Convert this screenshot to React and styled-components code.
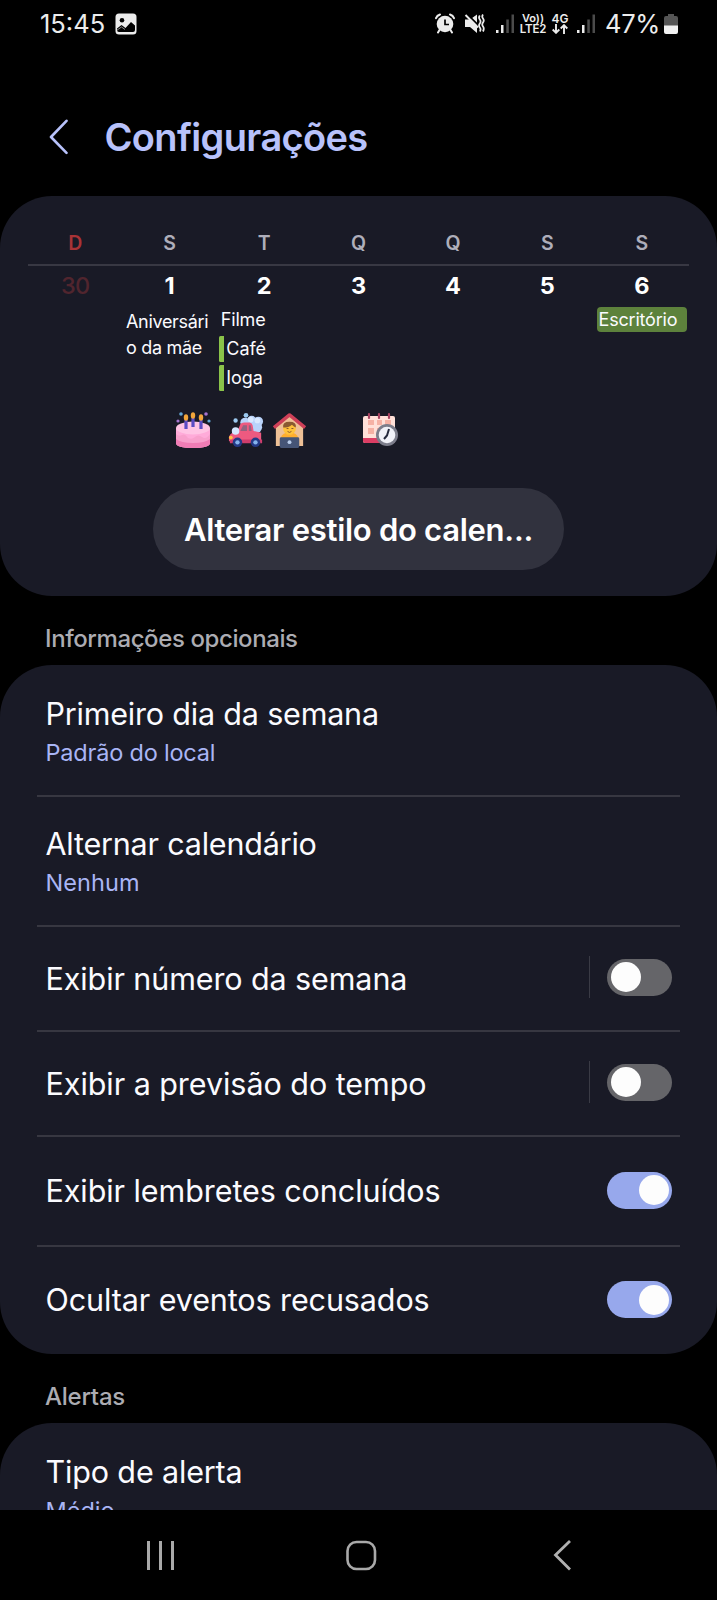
import React from 'react';
import styled, { createGlobalStyle } from 'styled-components';

const Global = createGlobalStyle`
  * { box-sizing: border-box; }
  html, body { margin: 0; background: #000; }
  body { width: 717px; height: 1600px; overflow: hidden; font-family: Inter, Roboto, "Liberation Sans", sans-serif; }
`;

const Screen = styled.main`
  display: flex;
  flex-direction: column;
  width: 717px;
  height: 1600px;
  background: #000;
  color: #fbfbff;
  overflow: hidden;
`;

const Label = styled.span`
  display: block;
  margin: 0;
  white-space: nowrap;
  font-size: ${(p) => p.$size}px;
  line-height: ${(p) => p.$line || p.$size}px;
  font-weight: ${(p) => p.$weight || 400};
  letter-spacing: ${(p) => p.$track || 0}px;
  color: ${(p) => p.$color || 'inherit'};
`;

const StatusBar = styled.header`
  display: flex;
  justify-content: space-between;
  height: 47px;
  padding: 0 38px 0 40px;
  align-items: center;
  color: #ececec;
`;
const StatusGroup = styled.div`
  display: flex;
  align-items: center;
  gap: ${(p) => p.$gap || 0}px;
`;
const StatusItem = styled.div`
  display: flex;
  flex: none;
  flex-direction: column;
  align-items: center;
  width: ${(p) => p.$width}px;
  margin-left: ${(p) => p.$before || 0}px;
`;

const TitleBar = styled.div`
  display: flex;
  align-items: center;
  height: 149px;
  padding: 30px 0 0 49px;
  gap: 35.5px;
`;

const Viewport = styled.div`
  flex: 1;
  min-height: 0;
  overflow: hidden;
`;

const Card = styled.section`
  background: #191a26;
  border-radius: 52px;
  height: ${(p) => p.$height}px;
`;

const CalendarCard = styled(Card)`
  display: flex;
  flex-direction: column;
  align-items: center;
  padding: 36px 28px 0;
`;
const WeekRow = styled.div`
  display: grid;
  grid-template-columns: repeat(7, 1fr);
  width: 661px;
  height: ${(p) => p.$height}px;
  justify-items: center;
  align-items: start;
  border-bottom: ${(p) => (p.$ruled ? '2px solid #383843' : '0')};
`;
const DayEvents = styled.div`
  justify-self: stretch;
  display: flex;
  flex-direction: column;
  gap: 3px;
  padding: 0 2px;
`;
const Wrapped = styled.p`
  margin: 0;
  padding: 2px 0 0 1.5px;
  font-size: 18px;
  line-height: 25.5px;
  white-space: pre;
  letter-spacing: ${(p) => p.$track}px;
`;
const EventChip = styled.div`
  height: ${(p) => (p.$fill ? 25 : 26)}px;
  padding-left: ${(p) => (p.$bar ? 2.5 : 2)}px;
  border-left: ${(p) => (p.$bar ? '5px solid #8bc34a' : '0')};
  border-radius: ${(p) => (p.$bar ? 1.5 : 4)}px;
  background: ${(p) => (p.$fill ? '#5d823c' : 'transparent')};
  font-size: 18px;
  line-height: 26px;
  letter-spacing: ${(p) => p.$track || 0}px;
  white-space: nowrap;
`;
const Stickers = styled.div`
  display: flex;
  align-items: center;
  width: 661px;
  height: 40px;
  padding: 0 0 1px 146px;
`;
const Sticker = styled.svg`
  display: block;
  width: ${(p) => p.$size || 38}px;
  height: ${(p) => p.$size || 38}px;
  margin-right: ${(p) => p.$after || 0}px;
`;
const StyleButton = styled.button`
  margin-top: 38px;
  width: 411px;
  height: 82px;
  padding: 2px 0 0;
  border: 0;
  border-radius: 41px;
  background: #31323e;
  color: #fff;
  font-family: inherit;
  display: flex;
  align-items: center;
  justify-content: center;
`;

const SectionTitle = styled.h2`
  margin: 0;
  height: 69px;
  padding: 29px 0 0 45px;
`;
const Setting = styled.div`
  display: flex;
  align-items: center;
  justify-content: space-between;
  height: ${(p) => p.$height}px;
  margin: 0 37px;
  padding: ${(p) => p.$top || 0}px 8px 0 8.5px;
  border-bottom: ${(p) => (p.$last ? '0' : '2px solid #373741')};
`;
const SettingText = styled.div`
  display: flex;
  flex-direction: column;
  gap: 1px;
`;
const Control = styled.div`
  display: flex;
  align-items: center;
  gap: 17px;
  padding-bottom: ${(p) => (p.$separated ? 3 : 1)}px;
`;
const Separator = styled.div`
  width: 1.5px;
  height: 42px;
  background: #3a3b45;
`;
const Toggle = styled.div`
  display: flex;
  align-items: center;
  justify-content: ${(p) => (p.$on ? 'flex-end' : 'flex-start')};
  width: 65px;
  height: 37px;
  padding: 0 3.5px;
  border-radius: 19px;
  background: ${(p) => (p.$on ? '#97a8ec' : '#656569')};
`;
const Knob = styled.div`
  width: 30px;
  height: 30px;
  border-radius: 50%;
  background: #fdfdfd;
`;

const NavBar = styled.nav`
  flex: none;
  height: 90px;
  display: flex;
  align-items: flex-start;
  padding: 29px 0 0 145px;
  background: #000;
`;
const NavIcon = styled.svg`
  display: block;
  width: 32px;
  height: 32px;
  margin-right: ${(p) => p.$after || 0}px;
`;

const PictureIcon = () => (
  <svg width="22" height="22" viewBox="0 0 22 22">
    <rect x=".5" y=".5" width="21" height="21" rx="3.5" fill="#ececec" />
    <circle cx="7" cy="7.3" r="2.3" fill="#000" />
    <path d="M2 15.500 6.500 12l4 3 5.500-6 4 3.500V17q0 2-2 2H4q-2 0-2-2z" fill="#000" />
    <path d="M1.500 17.500 6.500 14l3.500 2.500" fill="none" stroke="#ececec" strokeWidth=".6" />
  </svg>
);
const AlarmIcon = () => (
  <svg width="20" height="21" viewBox="0 0 20 21" fill="none" stroke="#ececec">
    <circle cx="10" cy="11" r="8.300" fill="#ececec" stroke="none" />
    <path d="M1 5.200Q2 2.400 5 1.500M19 5.200Q18 2.400 15 1.500M4.500 17 3 19.500M15.500 17l1.500 2.500" strokeWidth="2" strokeLinecap="round" />
    <path d="M10 6.500v5h4" stroke="#000" strokeWidth="1.700" />
  </svg>
);
const MuteIcon = () => (
  <svg width="21" height="21" viewBox="0 0 21 21">
    <path d="M1 6.500h5l7-5v18.500l-7-6H1z" fill="#ececec" />
    <path d="M3.500 1.500 14.500 12.500" stroke="#000" strokeWidth="1.800" />
    <path d="M1.500 2 14 14.500" stroke="#ececec" strokeWidth="2" />
    <path d="M15.800 2.500q-1.500 2 0 4t0 4 0 4 0 4M19 1.500q-1.500 2 0 4t0 4 0 4 0 5" fill="none" stroke="#ececec" strokeWidth="1.800" />
  </svg>
);
const SignalIcon = () => (
  <svg width="19" height="21" viewBox="0 0 19 21">
    <path d="M0 17h2.500v3H0zM5 12h2.500v8H5z" fill="#ececec" />
    <path d="M10.300 6.500h2.500V20h-2.500zM15.500 1.500H18V20h-2.500z" fill="#4b4b4b" />
  </svg>
);
const DataArrows = () => (
  <svg width="16" height="10" viewBox="0 0 16 10" fill="none" stroke="#ececec" strokeWidth="1.900">
    <path d="M4 0v9M.7 5.500 4 8.800l3.300-3.300M12 10V1M8.700 4.500 12 1.200l3.300 3.300" />
  </svg>
);
const BatteryIcon = () => (
  <svg width="16" height="22" viewBox="0 0 16 22">
    <path d="M5 1h6v2h2q2 0 2 2v8H1V5q0-2 2-2h2z" fill="#555" />
    <path d="M1 12.500h14V19q0 2-2 2H3q-2 0-2-2z" fill="#f1f1f1" />
  </svg>
);
const BackIcon = () => (
  <svg width="20" height="36" viewBox="0 0 20 36" fill="none" stroke="#b8c2fb" strokeWidth="2.600" strokeLinecap="round" strokeLinejoin="round">
    <path d="M17.500 1.800 2 18l15.500 15.800" />
  </svg>
);

const Cake = () => (
  <Sticker viewBox="0 0 38 38" $after={16}>
    <path d="M2 18v14q0 5 17 5t17-5V18z" fill="#f8a0cc" />
    <path d="M2 28q5 4 17 4t17-4v4q0 5-17 5T2 32z" fill="#f07db5" />
    <path d="M2 17v6q3 3 6 1t6 3q4 2 7-1t7 0q4 3 8-3v-6z" fill="#ffabd9" />
    <ellipse cx="19" cy="17" rx="17" ry="6.500" fill="#ffc4e4" />
    <path d="M12 9v9M19 7v9M27 9v9" stroke="#5b4cc4" strokeWidth="3.200" />
    <g fill="#f3a63a"><ellipse cx="12" cy="6.500" rx="2.200" ry="3.200" /><ellipse cx="19" cy="4.500" rx="2.200" ry="3.200" /><ellipse cx="27" cy="6.500" rx="2.200" ry="3.200" /></g>
    <g fill="#63a8d8"><circle cx="7" cy="3" r="1.800" /><circle cx="35" cy="10" r="1.600" /></g>
    <g fill="#a574cf"><circle cx="4" cy="10" r="1.600" /><circle cx="32" cy="3" r="1.800" /></g>
  </Sticker>
);
const Car = () => (
  <Sticker viewBox="0 0 38 38" $size={36} $after={7}>
    <g fill="#b9d3fa"><circle cx="18" cy="11" r="5" /><circle cx="25" cy="9" r="5" /><circle cx="32" cy="10" r="5" /><circle cx="30" cy="16" r="6" /></g>
    <g fill="#d9e9ff"><circle cx="24" cy="8" r="3" /><circle cx="31" cy="9" r="3" /></g>
    <g fill="#9cc9ef"><circle cx="19" cy="3.500" r="2.500" /><circle cx="8" cy="9" r="2.300" /></g>
    <path d="M1 31v-5q2-5 9-6l3-7q1-2 4-2h6q2 0 3 3l1 6 8 2v9z" fill="#ed5a80" />
    <path d="m13 20 3-6h4v6zM22 14h2l1 6h-3z" fill="#93627f" />
    <path d="M2 29h34v4H2z" fill="#cf3d6c" />
    <circle cx="8" cy="20" r="4" fill="#d5e7ff" /><circle cx="3" cy="27" r="2" fill="#ffc344" />
    <g fill="#243a86"><circle cx="10" cy="32" r="5" /><circle cx="29" cy="32" r="5" /></g>
    <g fill="#85b3ed"><circle cx="10" cy="32" r="2.300" /><circle cx="29" cy="32" r="2.300" /></g>
  </Sticker>
);
const HomeOffice = () => (
  <Sticker viewBox="0 0 38 38" $size={37} $after={53}>
    <path d="M5 15 19 5l14 10v21H5z" fill="#eec096" />
    <path d="M3 17 19 4l16 13" fill="none" stroke="#cf4058" strokeWidth="3.500" strokeLinejoin="round" />
    <path d="M10 28q1-6 9-6t9 6v3H10z" fill="#ffad2f" />
    <circle cx="19" cy="18" r="6.500" fill="#ffc23b" />
    <path d="M12.500 17q-1-6 6.500-6t6.500 6q-2-1-4-3-3 3-9 3z" fill="#8a5a30" />
    <path d="M16 18h2m3 0h2m-6 3q2 2 4 0" stroke="#8a532c" fill="none" />
    <rect x="9" y="27" width="20" height="11" rx="1.500" fill="#465577" />
    <circle cx="19" cy="32" r="2" fill="#b9cdeb" />
  </Sticker>
);
const CalendarClock = () => (
  <Sticker viewBox="0 0 38 38">
    <rect x="2" y="5" width="32" height="27" rx="2" fill="#ffe0d8" />
    <path d="M2 27h32v3q0 2-2 2H4q-2 0-2-2z" fill="#dc3e64" />
    <path d="M7 9h6v5H7zM16 9h5v5h-5zM24 9h6v5h-6zM7 17h6v6H7zM16 17h5v6h-5z" fill="#f5b1a4" />
    <path d="M8 3v4M18 3v4M28 3v4" stroke="#a84462" strokeWidth="2.200" strokeLinecap="round" />
    <circle cx="26" cy="24" r="11" fill="#7c7d8b" /><circle cx="26" cy="24" r="8.300" fill="#f0f1f8" />
    <path d="M28 18 26 24.500 23 28" stroke="#24283c" strokeWidth="2" fill="none" />
  </Sticker>
);

const weekdays = ['D', 'S', 'T', 'Q', 'Q', 'S', 'S'];
const dates = ['30', '1', '2', '3', '4', '5', '6'];

const SettingRow = ({ title, track, sub, subTrack, height, top, last, toggle, separated }) => (
  <Setting $height={height} $top={top} $last={last}>
    <SettingText>
      <Label $size={30.5} $line={40} $track={track}>{title}</Label>
      {sub && <Label $size={23.5} $line={36} $track={subTrack} $color="#a9b5f5">{sub}</Label>}
    </SettingText>
    {toggle && (
      <Control $separated={separated}>
        {separated && <Separator />}
        <Toggle $on={toggle === 'on'}><Knob /></Toggle>
      </Control>
    )}
  </Setting>
);

export default function App() {
  return (
    <Screen>
      <Global />
      <StatusBar>
        <StatusGroup $gap={9.5}>
          <Label $size={25.5}>15:45</Label>
          <PictureIcon />
        </StatusGroup>
        <StatusGroup>
          <StatusItem $width={20}><AlarmIcon /></StatusItem>
          <StatusItem $width={21} $before={9}><MuteIcon /></StatusItem>
          <StatusItem $width={19} $before={11}><SignalIcon /></StatusItem>
          <StatusItem $width={26} $before={5}>
            <Label $size={11} $line={11} $weight={600}>Vo))</Label>
            <Label $size={11.5} $line={11} $weight={600} $track={-0.2}>LTE2</Label>
          </StatusItem>
          <StatusItem $width={16} $before={6}>
            <Label $size={12} $line={11} $weight={600}>4G</Label>
            <DataArrows />
          </StatusItem>
          <StatusItem $width={19} $before={9}><SignalIcon /></StatusItem>
          <StatusItem $width={55} $before={9}><Label $size={25.5} $track={-0.3}>47%</Label></StatusItem>
          <StatusItem $width={16} $before={3}><BatteryIcon /></StatusItem>
        </StatusGroup>
      </StatusBar>
      <TitleBar>
        <BackIcon />
        <Label as="h1" $size={38} $line={46} $weight={600} $track={-0.65} $color="#b8c2fb">Configurações</Label>
      </TitleBar>
      <Viewport>
        <CalendarCard $height={399.5}>
          <WeekRow $height={34} $ruled>
            {weekdays.map((d, i) => (
              <Label key={i} $size={19.5} $line={22} $weight={600} $color={i ? '#aeaeba' : '#a93336'}>{d}</Label>
            ))}
          </WeekRow>
          <WeekRow $height={41}>
            {dates.map((d, i) => (
              <Label key={d} $size={23.5} $line={40} $weight={i ? 650 : 500} $track={i ? 0 : -0.8} $color={i ? '#fff' : '#51252e'}>{d}</Label>
            ))}
          </WeekRow>
          <WeekRow $height={103}>
            <span />
            <DayEvents><Wrapped $track={-0.3}>{'Aniversári\no da mãe'}</Wrapped></DayEvents>
            <DayEvents>
              <EventChip $track={-0.2}>Filme</EventChip>
              <EventChip $bar $track={-0.1}>Café</EventChip>
              <EventChip $bar $track={-0.1}>Ioga</EventChip>
            </DayEvents>
            <span /><span /><span />
            <DayEvents><EventChip $fill $track={-0.2}>Escritório</EventChip></DayEvents>
          </WeekRow>
          <Stickers><Cake /><Car /><HomeOffice /><CalendarClock /></Stickers>
          <StyleButton><Label $size={31} $line={40} $weight={600} $track={-0.28}>Alterar estilo do calen...</Label></StyleButton>
        </CalendarCard>
        <SectionTitle><Label $size={24} $line={28} $weight={550} $track={-0.4} $color="#acacb2">Informações opcionais</Label></SectionTitle>
        <Card $height={689}>
          <SettingRow title="Primeiro dia da semana" track={-0.19} sub="Padrão do local" subTrack={-0.2} height={132} top={6} />
          <SettingRow title="Alternar calendário" track={-0.2} sub="Nenhum" subTrack={0.1} height={130.5} top={4} />
          <SettingRow title="Exibir número da semana" track={-0.1} height={105} toggle="off" separated />
          <SettingRow title="Exibir a previsão do tempo" track={-0.05} height={105} toggle="off" separated />
          <SettingRow title="Exibir lembretes concluídos" track={-0.07} height={109.5} toggle="on" />
          <SettingRow title="Ocultar eventos recusados" track={-0.1} height={107} toggle="on" last />
        </Card>
        <SectionTitle><Label $size={24} $line={28} $weight={550} $track={-0.25} $color="#acacb2">Alertas</Label></SectionTitle>
        <Card $height={300}>
          <SettingRow title="Tipo de alerta" track={-0.15} sub="Médio" height={132} top={6} />
        </Card>
      </Viewport>
      <NavBar>
        <NavIcon viewBox="0 0 32 32" $after={168} stroke="#a9a9a9" strokeWidth="3"><path d="M3.500 2v29M15.500 2v29M27.500 2v29" /></NavIcon>
        <NavIcon viewBox="0 0 32 32" $after={175} fill="none" stroke="#a9a9a9" strokeWidth="2.600"><rect x="2.500" y="3" width="27.500" height="27" rx="9" /></NavIcon>
        <NavIcon viewBox="0 0 32 32" fill="none" stroke="#b0b0b0" strokeWidth="2.800"><path d="M18 2 3.500 16 18 30.500" /></NavIcon>
      </NavBar>
    </Screen>
  );
}
